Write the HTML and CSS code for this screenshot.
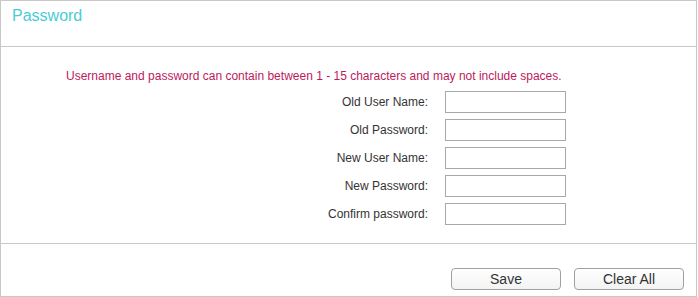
FILE: index.html
```html
<!DOCTYPE html>
<html lang="en">
<head>
  <meta charset="UTF-8">
  <title>Password</title>
  <link rel="stylesheet" href="styles.css">
</head>
<body>
  <div class="panel">
    <div class="panel-head">
      <div class="panel-title">Password</div>
    </div>
    <div class="panel-body">
      <div class="note">Username and password can contain between 1 - 15 characters and may not include spaces.</div>
      <div class="form-grid">
        <label class="form-label">Old User Name:</label>
        <input class="form-input" type="text">
        <label class="form-label">Old Password:</label>
        <input class="form-input" type="password">
        <label class="form-label">New User Name:</label>
        <input class="form-input" type="text">
        <label class="form-label">New Password:</label>
        <input class="form-input" type="password">
        <label class="form-label">Confirm password:</label>
        <input class="form-input" type="password">
      </div>
    </div>
    <div class="panel-foot">
      <button class="btn">Save</button>
      <button class="btn">Clear All</button>
    </div>
  </div>
</body>
</html>
```

FILE: styles.css
```css
html, body {
  margin: 0; padding: 0;
  background: #fff;
  font-family: Arial, 'Liberation Sans', sans-serif;
  color: #333;
}
.panel {
  width: 697px;
  height: 297px;
  box-sizing: border-box;
  border: 1px solid #c8c8c8;
  display: flex;
  flex-direction: column;
}
.panel-head {
  height: 46px;
  border-bottom: 1px solid #c8c8c8;
  padding: 6px 0 0 11px;
  box-sizing: border-box;
}
.panel-title {
  font-size: 16px;
  line-height: 18px;
  color: #4acbd6;
}
.panel-body {
  height: 197px;
  box-sizing: border-box;
  padding: 22px 0 0 65px;
  border-bottom: 1px solid #c8c8c8;
}
.note {
  font-size: 12px;
  line-height: 14px;
  color: #bd1a5c;
}
.form-grid {
  display: grid;
  grid-template-columns: 362px 121px;
  column-gap: 17px;
  row-gap: 6px;
  margin-top: 8px;
  align-items: center;
}
.form-label {
  font-size: 12px;
  line-height: 14px;
  text-align: right;
  color: #333;
}
.form-input {
  width: 121px;
  height: 22px;
  box-sizing: border-box;
  border: 1px solid #a8a8a8;
  margin: 0;
  padding: 0 4px;
  font-size: 12px;
  outline: none;
}
.panel-foot {
  flex: 1;
  display: flex;
  justify-content: flex-end;
  align-items: flex-start;
  gap: 13px;
  padding: 24px 12px 0 0;
}
.btn {
  width: 110px;
  height: 22px;
  box-sizing: border-box;
  border: 1px solid #a0a0a0;
  border-radius: 4px;
  background: linear-gradient(#fff, #f3f3f3);
  font-family: Arial, 'Liberation Sans', sans-serif;
  font-size: 14px;
  color: #333;
  padding: 0;
  cursor: pointer;
}
```
